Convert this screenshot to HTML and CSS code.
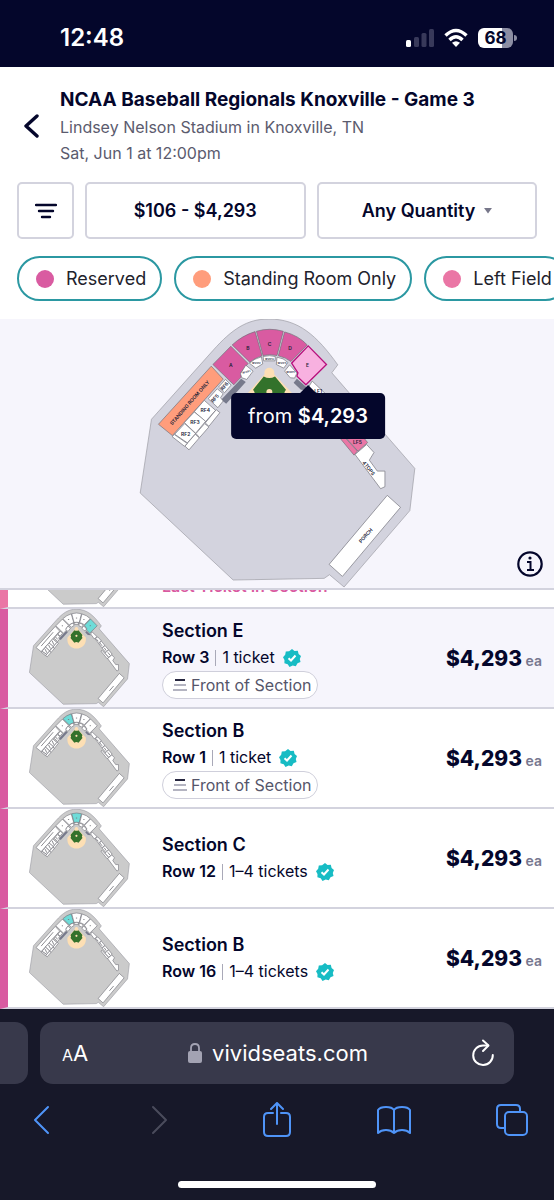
FILE: index.html
```html
<!DOCTYPE html>
<html lang="en">
<head>
    <meta charset="UTF-8">
    <meta name="viewport" content="width=device-width, initial-scale=1.0">
    <title>NCAA Baseball Regionals Knoxville - Game 3</title>
    <link rel="stylesheet" href="styles.css">
</head>
<body>

<!-- shared drawings -->
<svg class="defs" width="0" height="0" aria-hidden="true">
    <symbol id="stadium" viewBox="0 0 880 860">
        <path class="ground" d="M62 327 L247 120 C305 55 350 25 415 25 C505 25 560 75 623 163 L605 187 L855 475 L840 602 L642 832 L598 795 L582 806 L308 811 L28 549 Z"/>
        <path class="sand" d="M417 172 L404 190 L343 258 C325 380 510 380 495 258 L430 190 Z"/>
        <circle class="sand" cx="417" cy="187" r="15"/>
        <path class="grass" d="M400 198 Q417 208 434 198 L467 238 Q457 250 467 264 L434 302 Q417 292 400 302 L368 264 Q378 250 368 238 Z"/>
        <circle class="sand" cx="417" cy="245" r="9"/>
        <path class="dugout" d="M332 205 L346 215 L287 280 L272 268 Z M500 205 L490 217 L512 238 L540 240 Z"/>
        <path class="standing" d="M242 167 L278 206 L125 376 L83 342 Z"/>
        <path class="sec-a" d="M301 107 L353 159 L332 185 L332 200 L310 223 L247 162 Z"/>
        <path class="sec-b" d="M305 103 Q335 75 374 63 L395 136 Q375 142 358 155 Z"/>
        <path class="sec-c" d="M378 62 Q418 50 459 62 L440 135 Q418 130 398 135 Z"/>
        <path class="sec-d" d="M463 64 Q505 75 531 103 L482 153 Q465 140 444 136 Z"/>
        <path class="sec-e" d="M534 106 L589 162 L527 223 L500 197 L503 187 L484 158 Z"/>
        <g class="box">
            <path d="M330 190 L346 164 L368 182 L349 207 L334 202 Z"/>
            <path d="M357 158 Q372 144 393 139 L397 160 L376 173 Z"/>
            <path d="M398 138 Q418 133 435 138 L434 151 L400 151 Z"/>
            <path d="M440 140 Q460 142 473 156 L460 173 L438 162 Z"/>
            <path d="M478 163 L500 188 L493 203 L480 202 L463 182 Z"/>
            <path d="M285 207 L302 224 L282 247 L264 230 Z"/>
            <path d="M260 235 L278 250 L270 262 L278 272 L262 292 L233 265 Z"/>
            <path d="M221 270 L255 300 L225 334 L191 304 Z"/>
            <path d="M191 305 L225 333 L195 369 L161 337 Z"/>
            <path d="M162 340 L195 370 L170 398 L132 372 Z"/>
            <path d="M257 298 L268 307 L235 348 L224 338 Z"/>
            <path d="M222 340 L235 350 L207 382 L196 370 Z"/>
            <path d="M194 372 L206 383 L175 419 L163 408 L172 397 Z"/>
            <path d="M131 373 L170 400 L161 408 L124 379 Z"/>
            <path d="M546 212 L588 252 L564 270 L535 230 Z"/>
            <path d="M594 254 L622 285 L600 306 L571 270 Z"/>
            <path d="M624 290 L652 324 L628 344 L602 309 Z"/>
        </g>
        <g class="left-field">
            <path d="M654 326 L682 360 L662 384 L630 348 Z"/>
            <path d="M684 362 L713 397 L684 423 L652 388 Z"/>
            <path d="M620 372 L630 366 L682 423 L672 435 Z"/>
        </g>
        <path class="box" d="M675 433 L710 403 L732 427 L718 450 L742 483 L765 483 L765 530 L752 536 Z"/>
        <path class="box" d="M772 556 L812 592 L637 800 L597 764 Z"/>
        <g class="marks">
            <path d="M125 330 L225 215 M690 700 L725 660 M158 355 L172 385 M186 320 L202 350 M216 285 L230 318 M245 255 L262 275 M582 272 L598 290 M612 305 L630 328 M648 345 L664 368 M677 382 L694 404"/>
            <path d="M296 162 h10 M347 110 h10 M413 98 h10 M474 110 h10 M527 161 h10"/>
        </g>
    </symbol>
    <symbol id="verified" viewBox="0 0 18 18">
        <path fill="#17bcc4" d="M9 0 L11.500 2 L14.800 1.800 L15.600 5 L18 7 L16.800 10 L17.500 13 L14.500 14.300 L12.800 17.300 L9.700 16.600 L6.500 18 L4.700 15.200 L1.400 14.300 L1.500 11 L0 8.200 L2.200 5.700 L2.800 2.500 L6.100 2.300 Z"/>
        <path fill="none" stroke="#fff" stroke-width="2" d="M5.500 9.200 L8 11.500 L12.500 6.500"/>
    </symbol>
    <symbol id="front" viewBox="0 0 16 14">
        <path stroke="#26263f" stroke-width="2" d="M3 2 H13"/>
        <path stroke="#9c9cad" stroke-width="1.500" d="M2 7 H14 M1 12 H15"/>
    </symbol>
</svg>

<div class="status-bar">
    <span class="clock">12:48</span>
    <div class="status-icons">
        <svg width="28" height="20" viewBox="0 0 28 20" aria-hidden="true">
            <rect x="0" y="12" width="5" height="7" rx="1.500" fill="#fff"/>
            <g fill="#38395a">
                <rect x="8" y="9" width="5" height="10" rx="1.500"/>
                <rect x="15.500" y="5" width="5" height="14" rx="1.500"/>
                <rect x="23" y="1" width="5" height="18" rx="1.500"/>
            </g>
        </svg>
        <svg width="24" height="20" viewBox="0 0 24 20" aria-hidden="true">
            <g fill="none" stroke="#fff" stroke-width="3.400">
                <path d="M1.500 7.500 Q12 -2.500 22.500 7.500"/>
                <path d="M5.500 12 Q12 5.500 18.500 12"/>
            </g>
            <path fill="#fff" d="M8 14.800 Q12 11.500 16 14.800 L12 19 Z"/>
        </svg>
        <div class="battery"><span>68</span></div>
    </div>
</div>

<header class="event">
    <a class="back" href="#" aria-label="Back">
        <svg width="16" height="24" viewBox="0 0 16 24"><path d="M13 2 L2 12 L13 22" fill="none" stroke="#04062b" stroke-width="3.400" stroke-linecap="round" stroke-linejoin="round"/></svg>
    </a>
    <div class="event-info">
        <h1>NCAA Baseball Regionals Knoxville - Game 3</h1>
        <p>Lindsey Nelson Stadium in Knoxville, TN</p>
        <p>Sat, Jun 1 at 12:00pm</p>
    </div>
</header>

<div class="filters">
    <button class="filter" aria-label="Filters">
        <svg width="22" height="16" viewBox="0 0 22 16"><path d="M1 2 H21 M4 8 H18 M7 14 H15" stroke="#04062b" stroke-width="2.400" stroke-linecap="round"/></svg>
    </button>
    <button class="filter">$106 - $4,293</button>
    <label class="filter">
        <select aria-label="Quantity">
            <option>Any Quantity</option>
            <option>1</option>
            <option>2</option>
            <option>3</option>
            <option>4</option>
        </select>
        <svg width="8" height="7" viewBox="0 0 9 8" aria-hidden="true"><path d="M0 1 H9 L4.500 7.500 Z" fill="#77778a"/></svg>
    </label>
</div>

<div class="chips">
    <button class="chip"><span class="dot reserved"></span>Reserved</button>
    <button class="chip"><span class="dot standing-room"></span>Standing Room Only</button>
    <button class="chip"><span class="dot left"></span>Left Field</button>
</div>

<section class="map">
    <svg class="seat-map" viewBox="0 0 880 810" aria-label="Seat map">
        <use href="#stadium" x="0" y="-25" width="880" height="860"/>
        <g class="labels">
            <text x="301" y="141">A</text>
            <text x="352" y="89">B</text>
            <text x="418" y="76">C</text>
            <text x="479" y="89">D</text>
            <text x="532" y="140">E</text>
            <text transform="translate(178 253) rotate(-49)">STANDING ROOM ONLY</text>
            <text x="165" y="348">RF2</text>
            <text x="193" y="312">RF3</text>
            <text x="224" y="277">RF4</text>
            <text transform="translate(254 240) rotate(-49)">RF5</text>
            <text transform="translate(283 203) rotate(-49)">RF6</text>
            <text x="564" y="220">LF1</text>
            <text x="682" y="371">LF5</text>
            <text transform="translate(715 450) rotate(52)">4TOPS</text>
            <text transform="translate(708 653) rotate(-49)">PORCH</text>
        </g>
        <g class="labels small">
            <text transform="translate(348 160) rotate(-12)">WVIP1</text>
            <text x="378" y="132">WVIP2</text>
            <text x="417" y="120">WVIP3</text>
            <text x="455" y="132">WVIP4</text>
            <text x="481" y="159">WVIP5</text>
        </g>
    </svg>
    <div class="tooltip">from <strong>$4,293</strong></div>
    <button class="info" aria-label="Map information">
        <svg width="26" height="26" viewBox="0 0 26 26" fill="none" stroke="#04062b"><circle cx="13" cy="13" r="11.700" stroke-width="2.200"/><path d="M10 11 H13.500 V19 M10 19 H17" stroke-width="2"/><circle cx="13" cy="7" r="1.600" fill="#04062b" stroke="none"/></svg>
    </button>
</section>

<ul class="listings">
    <li class="listing left-field-row cut">
        <svg class="thumb" viewBox="28 23 829 811" aria-hidden="true"><use href="#stadium" width="880" height="860"/></svg>
        <p class="last">Last Ticket In Section</p>
    </li>
    <li>
        <a class="listing active" href="#">
            <svg class="thumb pick-e" viewBox="28 23 829 811" aria-hidden="true"><use href="#stadium" width="880" height="860"/></svg>
            <div class="details">
                <h2>Section E</h2>
                <p><b>Row 3</b><i></i>1 ticket<svg class="verified" aria-hidden="true"><use href="#verified"/></svg></p>
                <span class="tag"><svg width="16" height="14" aria-hidden="true"><use href="#front"/></svg>Front of Section</span>
            </div>
            <div class="price"><strong>$4,293</strong> ea</div>
        </a>
    </li>
    <li>
        <a class="listing" href="#">
            <svg class="thumb pick-b" viewBox="28 23 829 811" aria-hidden="true"><use href="#stadium" width="880" height="860"/></svg>
            <div class="details">
                <h2>Section B</h2>
                <p><b>Row 1</b><i></i>1 ticket<svg class="verified" aria-hidden="true"><use href="#verified"/></svg></p>
                <span class="tag"><svg width="16" height="14" aria-hidden="true"><use href="#front"/></svg>Front of Section</span>
            </div>
            <div class="price"><strong>$4,293</strong> ea</div>
        </a>
    </li>
    <li>
        <a class="listing" href="#">
            <svg class="thumb pick-c" viewBox="28 23 829 811" aria-hidden="true"><use href="#stadium" width="880" height="860"/></svg>
            <div class="details">
                <h2>Section C</h2>
                <p><b>Row 12</b><i></i>1–4 tickets<svg class="verified" aria-hidden="true"><use href="#verified"/></svg></p>
            </div>
            <div class="price"><strong>$4,293</strong> ea</div>
        </a>
    </li>
    <li>
        <a class="listing" href="#">
            <svg class="thumb pick-b" viewBox="28 23 829 811" aria-hidden="true"><use href="#stadium" width="880" height="860"/></svg>
            <div class="details">
                <h2>Section B</h2>
                <p><b>Row 16</b><i></i>1–4 tickets<svg class="verified" aria-hidden="true"><use href="#verified"/></svg></p>
            </div>
            <div class="price"><strong>$4,293</strong> ea</div>
        </a>
    </li>
</ul>

<footer class="browser">
    <div class="tabs">
        <div class="prev-tab"></div>
        <div class="address">
            <button class="text-size" aria-label="Text size"><small>A</small>A</button>
            <label class="url">
                <svg width="14" height="20" viewBox="0 0 14 20" aria-hidden="true"><rect x="0" y="8" width="14" height="12" rx="2" fill="#a3a3b3"/><path d="M3 9 V5 Q3 1 7 1 Q11 1 11 5 V9" fill="none" stroke="#a3a3b3" stroke-width="1.800"/></svg>
                <input type="text" value="vividseats.com" aria-label="Address">
            </label>
            <button aria-label="Reload">
                <svg width="22" height="28" viewBox="0 0 22 28" fill="none" stroke="#fff" stroke-width="2" stroke-linecap="round" stroke-linejoin="round"><path d="M16 6.500 H11 A9.800 9.800 0 1 0 20.800 16"/><path d="M11 1.500 L16.500 6.500 L11 12"/></svg>
            </button>
        </div>
    </div>
    <nav class="toolbar">
        <button aria-label="Back"><svg width="34" height="36" viewBox="0 0 34 36"><path d="M24 5 L11 18 L24 31"/></svg></button>
        <button class="off" aria-label="Forward" disabled><svg width="34" height="36" viewBox="0 0 34 36"><path d="M11 5 L24 18 L11 31"/></svg></button>
        <button aria-label="Share"><svg width="34" height="36" viewBox="0 0 34 36"><path d="M13 11 H8 Q4 11 4 15 V30 Q4 34 8 34 H26 Q30 34 30 30 V15 Q30 11 26 11 H21 M17 22 V2 M11 7 L17 1 L23 7"/></svg></button>
        <button aria-label="Bookmarks"><svg width="34" height="36" viewBox="0 0 34 36"><path d="M17 8 Q15 5 9 5 Q3 5 1 8 V31 Q4 28 9 28 Q14 28 17 31 Q20 28 25 28 Q30 28 33 31 V8 Q31 5 25 5 Q19 5 17 8 V31"/></svg></button>
        <button aria-label="Tabs"><svg width="34" height="36" viewBox="0 0 34 36"><rect x="10" y="10" width="22" height="23" rx="4"/><path d="M9 26 H6 Q2 26 2 22 V7 Q2 3 6 3 H21 Q25 3 25 7 V9"/></svg></button>
    </nav>
    <div class="home-bar"></div>
</footer>

</body>
</html>
```
FILE: styles.css
```css
* {
    box-sizing: border-box;
}

body {
    margin: 0;
    height: 100vh;
    display: flex;
    flex-direction: column;
    overflow: hidden;
    background: #fff;
    color: #04062b;
    font-family: Inter, "Liberation Sans", sans-serif;
    font-size: 16px;
}

h1, h2, p, ul {
    margin: 0;
    padding: 0;
}

ul {
    list-style: none;
}

a {
    color: inherit;
    text-decoration: none;
}

button, input, select {
    padding: 0;
    border: none;
    background: none;
    color: inherit;
    font: inherit;
}

svg {
    display: block;
    flex: none;
}

.defs {
    position: absolute;
}

/* phone status bar */
.status-bar {
    display: flex;
    justify-content: space-between;
    align-items: center;
    height: 67px;
    padding: 8px 41px 0 60px;
    background: #04062b;
    color: #fff;
}

.clock {
    font-size: 24px;
    font-weight: 600;
}

.status-icons {
    display: flex;
    align-items: center;
    gap: 10px;
}

.battery {
    position: relative;
    display: flex;
    align-items: center;
    justify-content: center;
    width: 35px;
    height: 20px;
    border-radius: 6px;
    background: linear-gradient(to right, #fff 68%, #8c8da3 68%);
    color: #04062b;
    font-size: 17px;
    font-weight: 700;
}

.battery::after {
    content: "";
    position: absolute;
    top: 7px;
    left: 100%;
    width: 3px;
    height: 6px;
    margin-left: 1px;
    border-radius: 0 3px 3px 0;
    background: #8c8da3;
}

/* event header */
.event {
    display: flex;
    align-items: center;
    padding: 19px 17px 16px 24px;
}

.back {
    width: 36px;
}

h1 {
    font-size: 19px;
    font-weight: 700;
    line-height: 28px;
}

.event-info p {
    color: #5b5b6e;
    line-height: 26px;
}

.filters {
    display: grid;
    grid-template-columns: 57px 1fr 1fr;
    gap: 11px;
    padding: 0 17px;
}

.filter {
    display: flex;
    align-items: center;
    justify-content: center;
    gap: 8px;
    height: 57px;
    border: 2px solid #d3d3de;
    border-radius: 5px;
    font-size: 18px;
    font-weight: 600;
}

.filter select {
    appearance: none;
}

.chips {
    display: flex;
    gap: 12px;
    padding: 17px 0 18px 17px;
    overflow: hidden;
}

.chip {
    display: flex;
    flex: none;
    align-items: center;
    gap: 12px;
    height: 45px;
    padding: 0 14px 0 17px;
    border: 2px solid #2b98a2;
    border-radius: 23px;
    color: #22222c;
    font-size: 18px;
}

.dot {
    width: 18px;
    height: 18px;
    border-radius: 50%;
}

.reserved {
    background: #d95ba1;
}

.standing-room {
    background: #ff9d7c;
}

.left {
    background: #ea76a5;
}

/* stadium drawing, recoloured through custom properties */
.ground {
    fill: var(--ground, #cbcbcb);
    stroke: #9a9aa2;
    stroke-width: var(--line, 5);
}

.sand {
    fill: #fddfb4;
}

.grass {
    fill: #33722b;
}

.dugout {
    fill: #777a8c;
}

.standing, .box, .left-field, .sec-a, .sec-b, .sec-c, .sec-d, .sec-e {
    fill: #fff;
    stroke: #6f6f78;
    stroke-width: var(--line, 5);
}

.standing {
    fill: var(--standing, #fff);
}

.left-field {
    fill: var(--left, #fff);
}

.sec-a {
    fill: var(--reserved, #fff);
}

.sec-b {
    fill: var(--b, var(--reserved, #fff));
}

.sec-c {
    fill: var(--c, var(--reserved, #fff));
}

.sec-d {
    fill: var(--reserved, #fff);
}

.sec-e {
    fill: var(--e, #fff);
    stroke: var(--e-line, #6f6f78);
    stroke-width: var(--e-width, 5);
}

.marks {
    display: var(--marks, inline);
    fill: none;
    stroke: #77777d;
    stroke-width: 7;
}

.map {
    position: relative;
    height: 271px;
    border-bottom: 2px solid #d3d3de;
    background: #f6f5fc;
}

.seat-map {
    --ground: #d3d3de;
    --line: 2;
    --standing: #ff9d7c;
    --left: #ea76a5;
    --reserved: #d95ba1;
    --e: #f8b1e0;
    --e-line: #b8107d;
    --e-width: 4;
    --marks: none;
    width: 100%;
    height: 100%;
}

.labels {
    fill: #222238;
    font-size: 15px;
    font-weight: 600;
    text-anchor: middle;
    dominant-baseline: middle;
}

.small {
    font-size: 8px;
}

.tooltip {
    position: absolute;
    top: 74px;
    left: calc(50% + 31px);
    padding: 0 17px;
    border-radius: 5px;
    background: #04062b;
    color: #fff;
    font-size: 20px;
    line-height: 46px;
    white-space: nowrap;
    transform: translateX(-50%);
}

.tooltip strong {
    font-weight: 600;
}

.tooltip::before {
    content: "";
    position: absolute;
    bottom: 100%;
    left: calc(50% - 8px);
    border: 8px solid transparent;
    border-top: none;
    border-bottom-color: #04062b;
}

.info {
    position: absolute;
    right: 11px;
    bottom: 11px;
}

/* ticket list */
.listings {
    flex: 1;
    min-height: 0;
    overflow: hidden;
}

.listing {
    display: flex;
    align-items: center;
    height: 100px;
    padding-right: 12px;
    padding-left: 21px;
    border-left: 8px solid #d95ba1;
    border-bottom: 2px solid #d3d3de;
}

.active {
    background: #f6f5fc;
}

.left-field-row {
    border-left-color: #ea76a5;
}

.cut {
    height: 19px;
    align-items: flex-end;
    overflow: hidden;
}

.last {
    padding-bottom: 11px;
    color: #d95ba1;
    font-weight: 600;
    line-height: 20px;
}

.thumb {
    width: 101px;
    height: 98px;
    margin-right: 32px;
}

.pick-b {
    --b: #6edcd8;
}

.pick-c {
    --c: #6edcd8;
}

.pick-e {
    --e: #6edcd8;
}

.details {
    flex: 1;
}

h2 {
    font-size: 18px;
    font-weight: 600;
    line-height: 27px;
}

.details p {
    display: flex;
    align-items: center;
    line-height: 27px;
}

.details b {
    font-weight: 600;
}

.details i {
    width: 1px;
    height: 16px;
    margin: 0 6px;
    background: #a9a9b8;
}

.verified {
    width: 18px;
    height: 18px;
    margin-left: 8px;
}

.tag {
    display: inline-flex;
    align-items: center;
    gap: 3px;
    height: 28px;
    padding: 0 6px 0 9px;
    border: 1px solid #cfcfdb;
    border-radius: 14px;
    background: #fff;
    color: #55556a;
    vertical-align: top;
}

.price {
    color: #77778f;
    font-size: 14px;
    font-weight: 600;
}

.price strong {
    color: #04062b;
    font-size: 21px;
    font-weight: 800;
}

/* browser chrome */
.browser {
    padding: 13px 0 12px;
    background: #171829;
}

.tabs {
    display: flex;
    gap: 12px;
    padding-right: 40px;
}

.prev-tab {
    width: 28px;
    border-radius: 0 13px 13px 0;
    background: #38394b;
}

.address {
    display: flex;
    flex: 1;
    align-items: center;
    justify-content: space-between;
    height: 62px;
    padding: 0 20px 0 22px;
    border-radius: 13px;
    background: #38394b;
    color: #fff;
    font-size: 22px;
}

.text-size small {
    font-size: 16px;
}

.url {
    display: flex;
    align-items: center;
    gap: 10px;
}

.url input {
    width: 160px;
}

.toolbar {
    display: flex;
    justify-content: space-between;
    padding: 18px 25px 43px 24px;
}

.toolbar svg {
    fill: none;
    stroke: #4f94f8;
    stroke-width: 2;
    stroke-linecap: round;
    stroke-linejoin: round;
}

.toolbar .off svg {
    stroke: #4a4b5c;
}

.home-bar {
    width: 198px;
    height: 7px;
    margin: 0 auto;
    border-radius: 4px;
    background: #fff;
}
```
